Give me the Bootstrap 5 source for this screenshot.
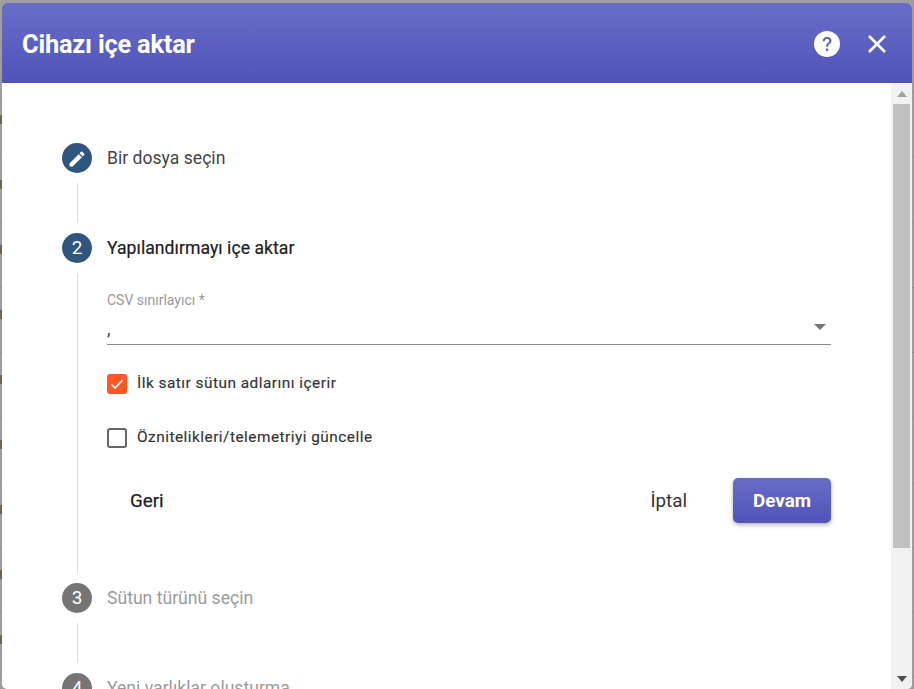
<!doctype html>
<html lang="tr">
<head>
<meta charset="utf-8">
<title>Cihazı içe aktar</title>
<link href="https://cdn.jsdelivr.net/npm/bootstrap@5.3.0/dist/css/bootstrap.min.css" rel="stylesheet">
<style>
html,body{height:689px;overflow:hidden}
body{font-family:Roboto,"Liberation Sans",sans-serif;padding:3px 2px 0;
 background-color:#9e9e9e;
 background-image:linear-gradient(#9e9e9e,#9e9e9e),linear-gradient(to bottom,#6f6550 0,#6f6550 9px,transparent 9px),repeating-linear-gradient(to bottom,transparent 0,transparent 64px,#8f8f8f 64px,#8f8f8f 65px);
 background-size:2px 100px,2px 65px,auto;background-repeat:no-repeat,repeat-y,repeat;
 background-position:0 0,0 50px,0 28px}
.dlg{width:910px;height:686px;border-radius:5px;overflow:hidden;background:#fff}
.dlg-head{height:80px;padding:0 25px 0 20px;background:linear-gradient(#6a6dc7,#4f53b8);color:#fff}
.dlg-title{font-size:25.4px;font-weight:700;letter-spacing:-.2px;margin:0;padding-top:1px;line-height:80px}
.head-ico{display:block;margin-top:2px}
.ico-gap{gap:27px}
.dlg-main{height:606px;min-height:0}
.scroll-area{width:889px;padding:60px 60px 0;overflow:hidden}
.bar{width:21px;background:#f1f1f1;padding:0 2px}
.bar-arrow{height:21px}
.bar-thumb{height:444px;width:17px;background:#c1c1c1}
.step-dot{width:30px;height:30px;border-radius:50%;background:#305680;color:#fff;font-size:19px;line-height:30px;text-align:center;flex:none}
.step-dot.off{background:#757575}
.step-name{font-size:17.6px;line-height:30px;color:#444;margin-left:15px}
.step-name.on{color:#212121;font-weight:400;letter-spacing:.04px;-webkit-text-stroke:.2px #212121}
.step-name.off{color:#9a9a9a}
.rail{margin:10px 0 10px 15px;height:40px;border-left:1px solid #ddd}
.rail.tall{height:300px;padding:0 0 0 29px}
.fld-label{font-size:14px;line-height:14px;color:#999;padding-top:20px}
.fld-select.form-select{border:0;border-bottom:1px solid #8c8c8c;border-radius:0;padding:6px 5px 0 0;height:38px;line-height:24px;font-size:17.6px;color:#333;font-family:inherit;box-shadow:none;
 background-image:url("data:image/svg+xml,%3Csvg xmlns='http://www.w3.org/2000/svg' width='12' height='6'%3E%3Cpath d='M0 0h12L6 6z' fill='%23757575'/%3E%3C/svg%3E");background-size:12px 6px;background-position:right 5px top 17px;width:724px}
.chk-row{height:20px;margin-top:34px}
.chk-row.first{margin-top:29px}
.chk-row .form-check-input{width:20px;height:20px;margin:0 10px 0 0;border:2px solid #666;border-radius:3px;box-shadow:none;flex:none}
.chk-row .form-check-input:checked{background-color:#ff5722;border-color:#ff5722;background-size:16px;
 background-image:url("data:image/svg+xml,%3Csvg xmlns='http://www.w3.org/2000/svg' viewBox='0 0 16 16'%3E%3Cpath d='M2.5 8.5l3.6 3.6 7.4-8' fill='none' stroke='%23fff' stroke-width='1.7'/%3E%3C/svg%3E")}
.chk-row label{font-size:15.4px;font-weight:400;color:#333;letter-spacing:.48px;-webkit-text-stroke:.15px #333}
.act-row{margin-top:30px;height:45px;width:724px}
.act{font-family:inherit;font-size:18.8px;border:0;background:none;padding:1px 0 0;line-height:45px;color:#222}
.act.back{font-weight:400;-webkit-text-stroke:.25px #222;margin-left:23px}
.act.cancel{color:#333;margin-right:46px}
.act.go{width:98px;height:45px;border-radius:5px;color:#fff;font-weight:700;background:linear-gradient(#6a6dc7,#4f53b8);box-shadow:0 2px 4px rgba(0,0,0,.3)}
</style>
</head>
<body>
<div class="dlg d-flex flex-column">
  <header class="dlg-head d-flex align-items-center justify-content-between">
    <h1 class="dlg-title">Cihazı içe aktar</h1>
    <div class="d-flex align-items-center ico-gap">
      <svg class="head-ico" width="26" height="26" viewBox="0 0 26 26"><circle cx="13" cy="13" r="13" fill="#fff"/><path d="M8.6 10.2c0-2.6 1.9-4.3 4.5-4.3s4.4 1.6 4.4 3.8c0 2.9-3.4 3-3.4 6h-2c0-3.6 3.2-3.8 3.2-5.9 0-1.1-1-2-2.2-2s-2.4.9-2.4 2.4zM12.1 17.6h2V20h-2z" fill="#5a5dbd"/></svg>
      <svg class="head-ico" width="20" height="20" viewBox="0 0 20 20"><path d="M2 2l16 16M18 2L2 18" stroke="#fff" stroke-width="2.6" fill="none"/></svg>
    </div>
  </header>
  <div class="dlg-main d-flex">
    <div class="scroll-area">
      <div class="d-flex">
        <div class="step-dot"><svg width="20" height="20" viewBox="0 0 24 24" class="align-middle"><path fill="#fff" d="M3 17.25V21h3.75L17.81 9.94l-3.75-3.75L3 17.25zM20.71 7.04a1 1 0 0 0 0-1.41l-2.34-2.34a1 1 0 0 0-1.41 0l-1.83 1.83 3.75 3.75 1.83-1.83z"/></svg></div>
        <div class="step-name">Bir dosya seçin</div>
      </div>
      <div class="rail"></div>
      <div class="d-flex">
        <div class="step-dot">2</div>
        <div class="step-name on">Yapılandırmayı içe aktar</div>
      </div>
      <div class="rail tall">
        <div class="fld-label">CSV sınırlayıcı *</div>
        <select class="form-select fld-select" aria-label="CSV sınırlayıcı"><option>,</option></select>
        <div class="chk-row first d-flex align-items-center">
          <input class="form-check-input" type="checkbox" id="c1" checked>
          <label for="c1">İlk satır sütun adlarını içerir</label>
        </div>
        <div class="chk-row d-flex align-items-center">
          <input class="form-check-input" type="checkbox" id="c2">
          <label for="c2">Öznitelikleri/telemetriyi güncelle</label>
        </div>
        <div class="act-row d-flex align-items-center">
          <button type="button" class="act back me-auto">Geri</button>
          <button type="button" class="act cancel">İptal</button>
          <button type="button" class="act go">Devam</button>
        </div>
      </div>
      <div class="d-flex">
        <div class="step-dot off">3</div>
        <div class="step-name off">Sütun türünü seçin</div>
      </div>
      <div class="rail"></div>
      <div class="d-flex">
        <div class="step-dot off">4</div>
        <div class="step-name off">Yeni varlıklar oluşturma</div>
      </div>
    </div>
    <div class="bar d-flex flex-column align-items-center">
      <div class="bar-arrow d-flex align-items-center justify-content-center"><svg width="10" height="6"><path d="M5 0l5 6H0z" fill="#a3a3a3"/></svg></div>
      <div class="bar-thumb"></div>
      <div class="bar-arrow d-flex align-items-center justify-content-center mt-auto"><svg width="10" height="6"><path d="M0 0h10L5 6z" fill="#505050"/></svg></div>
    </div>
  </div>
</div>
<script src="https://cdn.jsdelivr.net/npm/bootstrap@5.3.0/dist/js/bootstrap.bundle.min.js"></script>
</body>
</html>
